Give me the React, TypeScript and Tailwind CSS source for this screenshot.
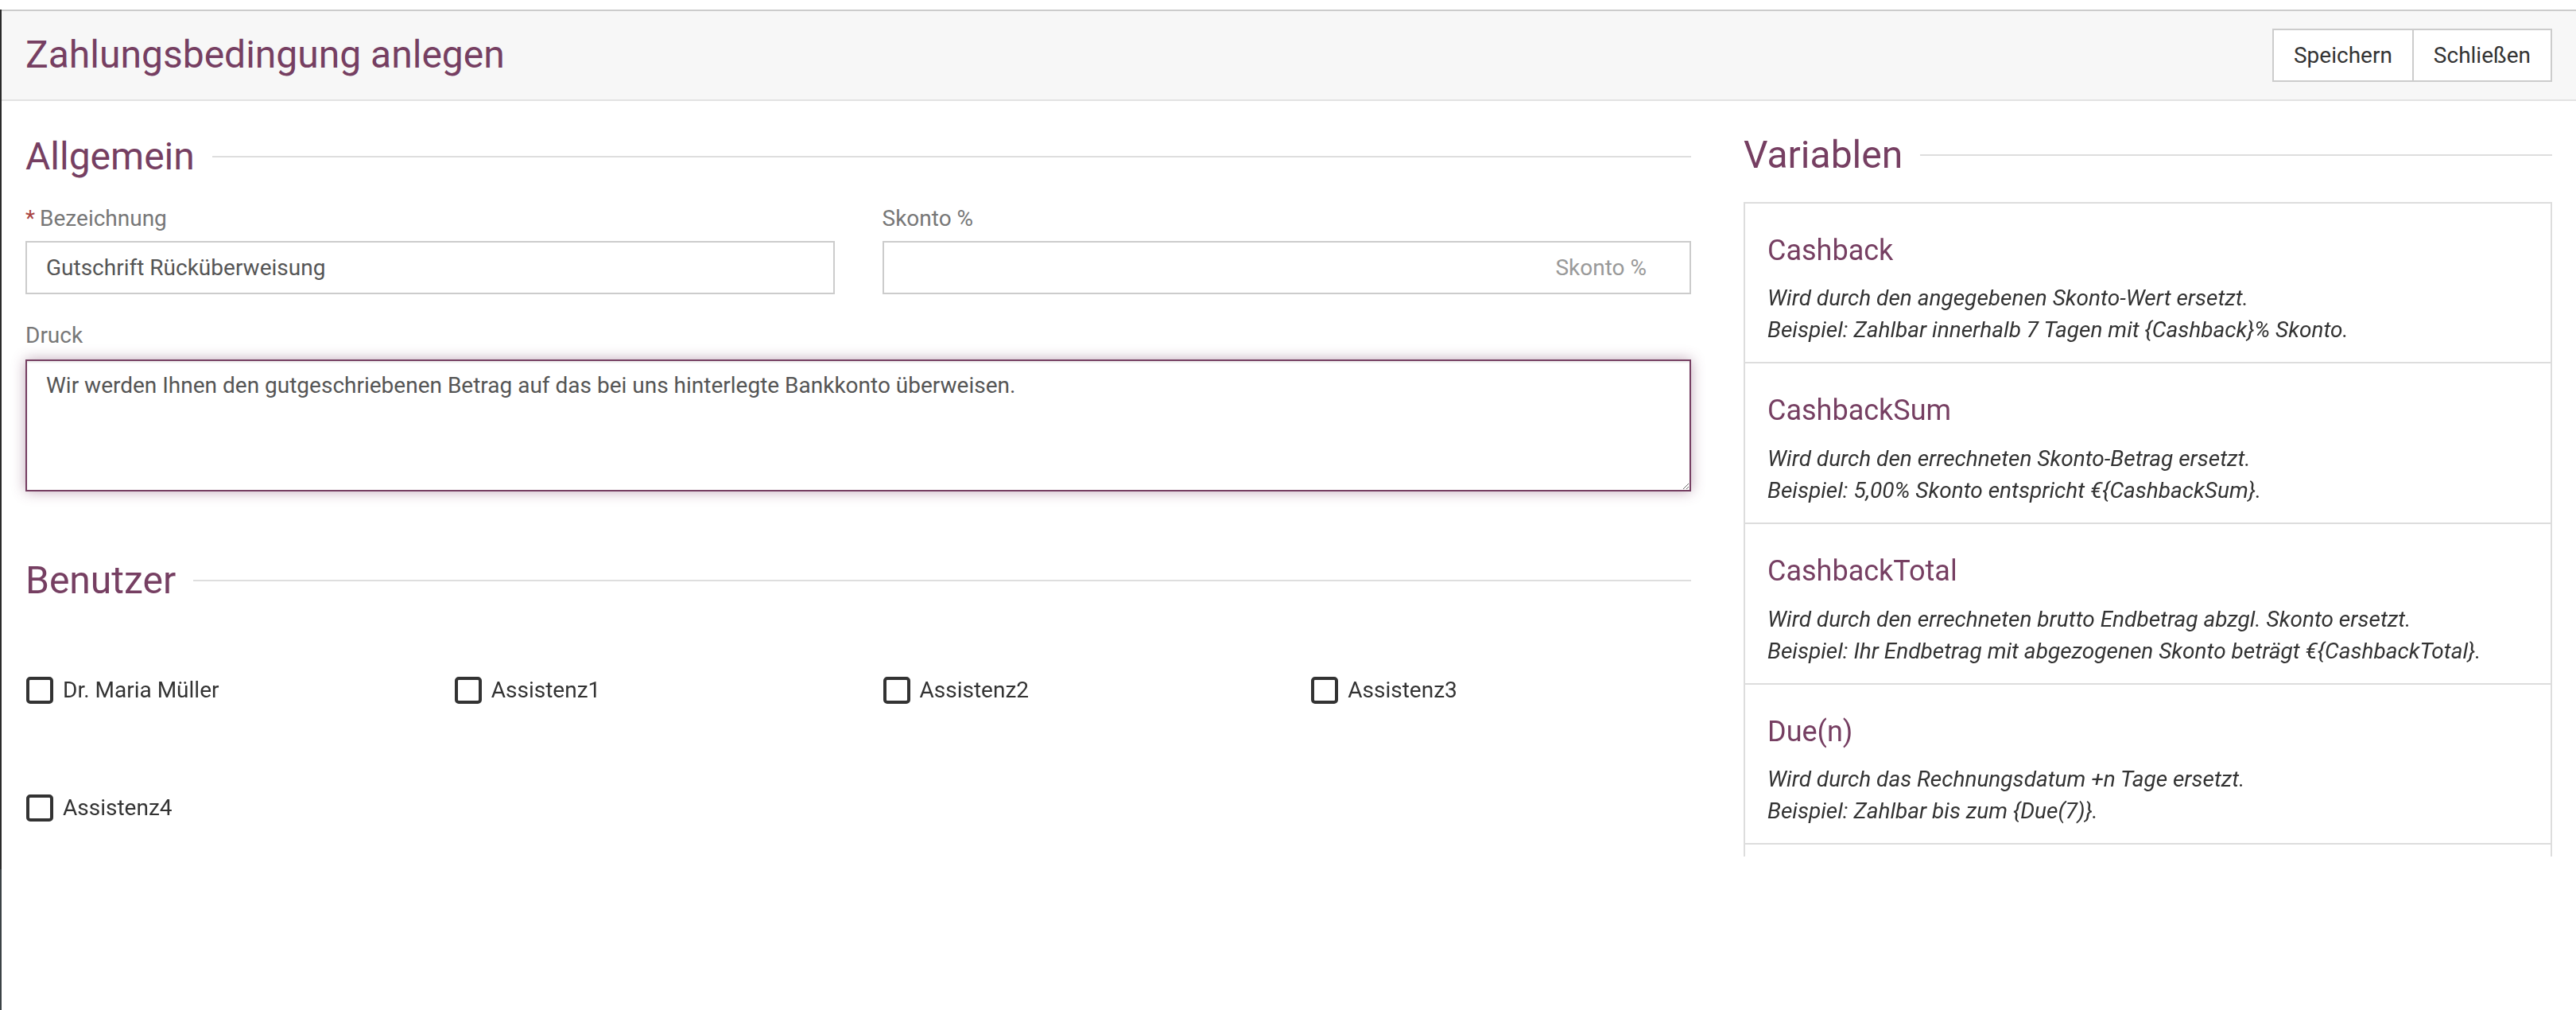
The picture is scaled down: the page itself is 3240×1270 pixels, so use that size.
import { useEffect, useRef } from "react";

const vars = [
  {
    name: "Cashback",
    l1: "Wird durch den angegebenen Skonto-Wert ersetzt.",
    l2: "Beispiel: Zahlbar innerhalb 7 Tagen mit {Cashback}% Skonto.",
  },
  {
    name: "CashbackSum",
    l1: "Wird durch den errechneten Skonto-Betrag ersetzt.",
    l2: "Beispiel: 5,00% Skonto entspricht €{CashbackSum}.",
  },
  {
    name: "CashbackTotal",
    l1: "Wird durch den errechneten brutto Endbetrag abzgl. Skonto ersetzt.",
    l2: "Beispiel: Ihr Endbetrag mit abgezogenen Skonto beträgt €{CashbackTotal}.",
  },
  {
    name: "Due(n)",
    l1: "Wird durch das Rechnungsdatum +n Tage ersetzt.",
    l2: "Beispiel: Zahlbar bis zum {Due(7)}.",
  },
];

const users = ["Dr. Maria Müller", "Assistenz1", "Assistenz2", "Assistenz3", "Assistenz4"];

function SectionTitle({ children }: { children: React.ReactNode }) {
  return (
    <div className="flex items-center gap-[22px]">
      <h2 className="text-[48px] leading-[1.1] text-[#763f62] font-normal whitespace-nowrap">{children}</h2>
      <div className="flex-1 h-[2px] bg-[#dedede]" />
    </div>
  );
}

export default function App() {
  const taRef = useRef<HTMLTextAreaElement>(null);
  useEffect(() => {
    const t = taRef.current;
    if (t) {
      t.focus();
      const n = t.value.length;
      t.setSelectionRange(n, n);
    }
  }, []);

  return (
    <div className="w-[3240px] h-[1270px] bg-white font-[Roboto,sans-serif] flex flex-col overflow-hidden">
      <div className="h-[12px] shrink-0" />
      <div className="flex flex-1 min-h-0">
        <div className="w-[2px] shrink-0 flex flex-col">
          <div className="h-[1081px] bg-[#2a2a2a]" />
          <div className="flex-1 bg-[#3c4347]" />
        </div>
        <div className="flex-1 flex flex-col min-w-0">
          <header className="h-[115px] shrink-0 bg-[#f7f7f7] border-t-2 border-t-[#cccccc] border-b-2 border-b-[#e3e3e3] flex items-center justify-between pl-[30px] pr-[30px]">
            <h1 className="text-[48px] leading-[1.1] text-[#763f62] font-normal">Zahlungsbedingung anlegen</h1>
            <div className="flex border-2 border-[#cccccc] bg-white">
              <button className="h-[63px] px-[25px] text-[28px] text-[#333333] border-r-2 border-[#cccccc]">Speichern</button>
              <button className="h-[63px] px-[25px] text-[28px] text-[#333333]">Schließen</button>
            </div>
          </header>

          <div className="flex flex-1 pl-[30px] pr-[30px] gap-[66px]">
            <div className="w-[2095px] shrink-0 pt-[44px]">
              <SectionTitle>Allgemein</SectionTitle>
              <div className="grid grid-cols-2 gap-x-[60px] mt-[31px]">
                <div>
                  <label className="block text-[28px] leading-[40px] text-[#777777] mb-[8px]">
                    <span className="text-[#a94442] mr-[6px]">*</span>Bezeichnung
                  </label>
                  <input
                    className="w-full h-[67px] border-2 border-[#cccccc] px-[24px] text-[28px] text-[#555555] outline-none"
                    defaultValue="Gutschrift Rücküberweisung"
                  />
                </div>
                <div>
                  <label className="block text-[28px] leading-[40px] text-[#777777] mb-[8px]">Skonto %</label>
                  <input
                    className="w-full h-[67px] border-2 border-[#cccccc] pl-[24px] pr-[54px] text-right text-[28px] text-[#555555] placeholder:text-[#999999] outline-none"
                    placeholder="Skonto %"
                  />
                </div>
              </div>
              <div className="mt-[32px]">
                <label className="block text-[28px] leading-[40px] text-[#777777] mb-[10px]">Druck</label>
                <textarea
                  ref={taRef}
                  className="block w-full h-[166px] border-2 border-[#763f62] px-[24px] py-[11px] text-[28px] leading-[40px] text-[#555555] outline-none shadow-[inset_0_2px_2px_rgba(0,0,0,0.075),0_0_16px_rgba(118,63,98,0.45)] caret-[#333333]"
                  defaultValue="Wir werden Ihnen den gutgeschriebenen Betrag auf das bei uns hinterlegte Bankkonto überweisen."
                />
              </div>
              <div className="mt-[86px]">
                <SectionTitle>Benutzer</SectionTitle>
              </div>
              <div className="grid grid-cols-4 gap-x-[60px] gap-y-[114px] mt-[94px]">
                {users.map((u) => (
                  <div key={u} className="flex items-center gap-[12px] pl-[1px] h-[34px]">
                    <div className="w-[34px] h-[34px] border-[4px] border-[#333333] rounded-[5px] bg-white shrink-0" />
                    <span className="text-[28px] text-[#333333] leading-[34px]">{u}</span>
                  </div>
                ))}
              </div>
            </div>

            <div className="flex-1 min-w-0 pt-[42px]">
              <SectionTitle>Variablen</SectionTitle>
              <div className="mt-[32px] h-[823px] overflow-hidden border-x-2 border-[#dddddd]">
                {vars.map((v) => (
                  <div key={v.name} className="border-t-2 border-[#dddddd] px-[28px] py-[20px]">
                    <h3 className="mt-[20px] mb-[20px] text-[36px] leading-[1.1] text-[#763f62] font-normal">{v.name}</h3>
                    <p className="text-[28px] leading-[40px] italic text-[#333333]">
                      {v.l1}
                      <br />
                      {v.l2}
                    </p>
                  </div>
                ))}
                <div className="border-t-2 border-[#dddddd] h-[200px]" />
              </div>
            </div>
          </div>
        </div>
      </div>
    </div>
  );
}
